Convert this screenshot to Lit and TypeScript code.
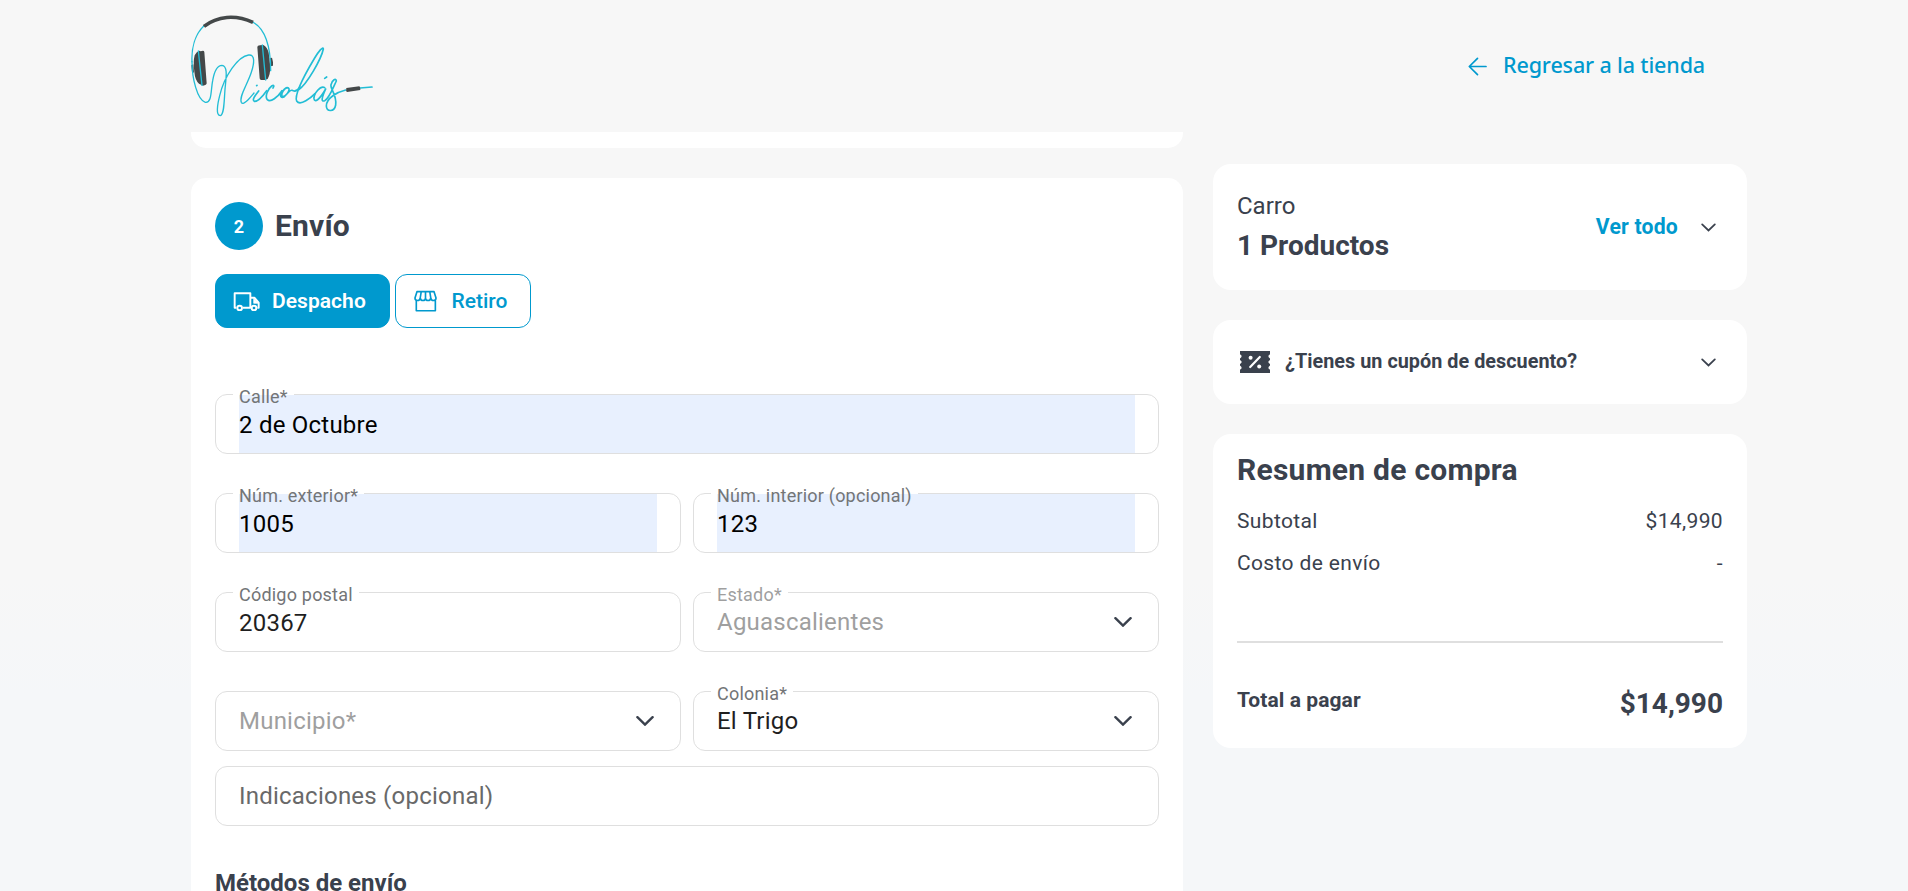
import { LitElement, html, svg, css, nothing } from "lit";
import { customElement, property } from "lit/decorators.js";
import { classMap } from "lit/directives/class-map.js";

const chevron = (size: "sm" | "lg") => html`
  <svg class="chev ${size}" viewBox="0 0 18 10" aria-hidden="true">
    <path d="M1.4 1.2 9 8.6 16.6 1.2" fill="none" stroke="currentColor"
      stroke-width=${size === "lg" ? 2.4 : 2.1} stroke-linecap="round" stroke-linejoin="miter" />
  </svg>`;

@customElement("form-field")
class FormField extends LitElement {
  @property() label = "";
  @property() value = "";
  @property() placeholder = "";
  @property({ type: Boolean }) autofill = false;
  @property({ type: Boolean }) select = false;
  @property({ type: Boolean }) disabled = false;

  static styles = css`
    :host { display: block; min-width: 0; }
    .field {
      box-sizing: border-box; height: 60px; min-width: 0; margin: 0;
      border: 1px solid #dfdfdf; border-radius: 12px; padding: 0 23px;
      font: 400 24px/28px Roboto, sans-serif; letter-spacing: 0.225px; color: #1f1f1f;
    }
    .legend {
      height: 1px; margin-left: -6px; padding: 0 6px; position: relative; top: -7px;
      font-size: 18px; line-height: 20px; letter-spacing: 0.21px; color: #737577; white-space: nowrap;
    }
    .body { height: 58px; display: flex; align-items: center; justify-content: space-between; }
    .input .text { padding-top: 1px; }
    .autofill { background: #e8f0fe; color: #000; }
    .placeholder { color: #696969; }
    .disabled, .disabled .legend, .disabled .placeholder { color: #9f9f9f; }
    .chev { width: 18px; height: 10px; margin-right: 3px; color: #3a414d; }
  `;

  render() {
    return html`
      <fieldset class=${classMap({ field: true, disabled: this.disabled })}>
        ${this.label ? html`<legend class="legend">${this.label}</legend>` : nothing}
        <div class=${classMap({ body: true, autofill: this.autofill, input: !this.select && !!this.value })}>
          <span class=${classMap({ text: true, placeholder: !this.value })}>${this.value || this.placeholder}</span>
          ${this.select ? chevron("lg") : nothing}
        </div>
      </fieldset>`;
  }
}

@customElement("brand-logo")
class BrandLogo extends LitElement {
  static styles = css`
    :host { display: block; }
    .logo { display: block; width: 190px; height: 132px; }
    .wire { fill: none; stroke: #22bdd5; stroke-width: 5; stroke-linecap: round; stroke-linejoin: round; }
    .thin { stroke-width: 4; }
    .dark { fill: #444849; }
    .band { fill: none; stroke: #444849; stroke-width: 11; }
  `;
  render() {
    return html`
      <svg class="logo" viewBox="33 0 570 396" role="img" aria-label="Nicolás">
        ${svg`
        <path class="dark" d="M62 154 Q72 150 73 156 L80 250 Q80 255 69 257 L57 251 Q45 240 43 215 Q39 185 44 166 Q50 154 58 152Z" />
        <path class="dark" d="M34 196 L40 193 L42 218 L36 216Z" />
        <path class="dark" d="M232 141 Q232 137 240 136 L250 135 Q262 142 266 158 L271 200 Q271 222 263 237 L253 240 L243 240 Q239 239 239 235Z" />
        <path class="dark" d="M269 175 L276 173 Q280 185 279 197 L271 199Z" />
        <path class="wire thin" d="M72 77 C45 103 34 145 36 185" />
        <path class="wire thin" d="M218 66 C255 86 272 135 272 212" />
        <path class="wire thin" d="M55 153 L66 256 M247 135 L257 240" />
        <path class="band" d="M72 79 C112 48 166 43 219 67" />
        <path class="wire thin" d="M36 185 C36 235 52 300 76 307 C96 310 92 272 98 242 C103 213 114 196 126 196 C143 198 139 228 136 258 C132 292 134 345 121 347 C107 347 112 315 119 287 C133 228 174 169 206 165 C226 163 223 190 214 217 C203 252 176 290 184 307 C190 319 210 293 222 279" />
        <path class="wire" d="M236 273 C225 287 215 300 223 304 C236 305 250 286 260 272 M230 257 L231 256" />
        <path class="wire" d="M279 264 C284 257 281 254 275 258 C263 267 254 289 262 299 C272 309 293 291 306 272 C297 288 303 296 313 290 C325 281 333 263 322 263 C312 264 302 282 306 289 C318 295 326 267 336 271 C345 276 354 270 360 261" />
        <path class="wire" d="M355 270 C382 252 424 176 430 147 C429 138 416 154 404 174 C377 219 342 284 350 303 C361 320 394 292 405 281" />
        <path class="wire" d="M434 263 C422 255 401 281 402 296 C404 308 417 302 437 267 C424 296 423 306 434 302 C448 296 461 259 469 243 C468 233 457 239 453 254 C450 268 471 284 467 315 C463 337 440 336 439 318 C439 294 472 276 497 270 M434 235 L440 231" />
        <path class="wire" d="M540 264 L576 261" />
        <path class="dark" d="M499 264 L538 259 Q541 260 541 270 L501 276 Q497 274 499 264Z" />`}
      </svg>`;
  }
}

@customElement("app-root")
class AppRoot extends LitElement {
  static styles = css`
    :host {
      display: block; height: 891px; overflow: hidden;
      background: linear-gradient(#f7f7f7 65%, #f5f7f9 78%);
      font-family: Roboto, sans-serif; color: #3a414d;
    }
    .header {
      height: 132px; box-sizing: border-box; padding: 0 203px 0 191px;
      display: flex; justify-content: space-between; align-items: center;
    }
    .back {
      display: flex; align-items: center; gap: 16px; color: #0099ce; padding-bottom: 2px;
      font: 500 21.5px/30px "Noto Sans", "Open Sans", sans-serif; letter-spacing: -.14px;
    }
    .back-text { padding-bottom: 1px; }
    .arrow { width: 19px; height: 19px; margin-top: 3px; }
    .columns { display: grid; grid-template-columns: 992px 534px; gap: 30px; padding-left: 191px; }
    .left, .right { display: flex; flex-direction: column; gap: 30px; }
    .right { padding-top: 32px; }
    .previous { height: 16px; border-radius: 0 0 15px 15px; background: #fff; }
    .step { height: 800px; box-sizing: border-box; padding: 24px; border-radius: 15px; background: #fff; }
    .heading { display: flex; align-items: center; gap: 12px; font-size: 30px; font-weight: 700; letter-spacing: .2px; }
    .title { padding-bottom: 2px; }
    .number {
      width: 48px; height: 48px; border-radius: 50%; background: #0099ce; color: #fff;
      display: grid; place-items: center; font-size: 18px; letter-spacing: 0;
    }
    .tabs { display: flex; gap: 5px; margin: 24px 0 66px; }
    .tab {
      height: 54px; width: 136px; box-sizing: border-box; border: 1px solid #0099ce; border-radius: 12px;
      display: flex; align-items: center; padding-left: 18px; font-size: 21px; font-weight: 500; color: #0099ce;
    }
    .tab.active { width: 175px; background: #0099ce; color: #fff; padding-left: 17px; letter-spacing: .05px; font-weight: 600; }
    .truck { width: 28px; height: 20px; margin-right: 11px; }
    .store { width: 25px; height: 23px; margin-left: -1px; margin-right: 13.5px; }
    .fields { display: grid; grid-template-columns: 1fr 1fr; column-gap: 12px; row-gap: 39px; }
    .wide { grid-column: 1 / -1; }
    .notes { margin-top: 15px; }
    .methods { margin: 43px 0 0; font-size: 24px; line-height: 28px; font-weight: 700; }
    .card { box-sizing: border-box; border-radius: 18px; background: #fff; padding: 0 24px; }
    .row { display: flex; justify-content: space-between; align-items: center; }
    .cart { height: 126px; }
    .cart-text { padding-bottom: 2px; }
    .cart-title { font-size: 24px; line-height: 38px; }
    .cart-count { font-size: 28px; line-height: 41px; font-weight: 700; }
    .more { display: flex; align-items: center; gap: 23px; margin-right: 7px; color: #0099ce; font-size: 21.2px; letter-spacing: .2px; font-weight: 700; }
    .more-text { padding-bottom: 1px; }
    .coupon { height: 84px; }
    .coupon-label { display: flex; align-items: center; gap: 15px; padding-left: 3px; font-size: 19.8px; letter-spacing: .04px; font-weight: 700; }
    .coupon-text { padding-bottom: 2px; }
    .ticket { width: 30px; height: 22px; }
    .chev { width: 15px; height: 9px; color: #3a414d; display: block; }
    .coupon .chev { margin-right: 7px; }
    .summary { height: 314px; padding-top: 18px; }
    .summary-title { margin: 0 0 12px; font-size: 30px; line-height: 36px; letter-spacing: .25px; font-weight: 700; }
    .line { font-size: 21px; line-height: 42px; letter-spacing: .36px; }
    .total { margin-top: 57px; border-top: 2px solid #dfdfdf; padding-top: 37px; align-items: flex-start; font-weight: 700; }
    .total-label { font-size: 21px; line-height: 40px; letter-spacing: .08px; }
    .total-value { font-size: 28px; line-height: 48px; }
  `;

  render() {
    return html`
      <header class="header">
        <brand-logo></brand-logo>
        <a class="back">
          <svg class="arrow" viewBox="0 0 19 19" fill="none" stroke="currentColor" stroke-width="1.7" stroke-linecap="round" stroke-linejoin="round">
            <path d="M18 9.5H1.5M9.5 1.3 1.3 9.5 9.5 17.7" />
          </svg>
          <span class="back-text">Regresar a la tienda</span>
        </a>
      </header>
      <main class="columns">
        <div class="left">
          <div class="previous"></div>
          <section class="step">
            <div class="heading"><span class="number">2</span><span class="title">Envío</span></div>
            <div class="tabs">
              <div class="tab active">
                <svg class="truck" viewBox="24 18 84 60" fill="none" stroke="currentColor" stroke-width="5.8" stroke-linejoin="round">
                  <path d="M34 68H29V25H76V68H54M76 38H88L101 53V68H97" />
                  <circle cx="44" cy="69" r="7" /><circle cx="87" cy="69" r="7" />
                  <path d="M86 40 101 55H86Z" fill="currentColor" stroke-width="2" />
                </svg>
                <span>Despacho</span>
              </div>
              <div class="tab">
                <svg class="store" viewBox="700 510 76 70" fill="none" stroke="currentColor" stroke-width="5" stroke-linejoin="round">
                  <path d="M712 515H764L770 534Q770 542 762 542Q755 542 754 534Q753 542 746 542Q738 542 738 534Q738 542 730 542Q723 542 722 534Q721 542 714 542Q706 542 706 534ZM725 515 722 534M738 515V534M751 515 754 534M710 542V573H768V542" />
                </svg>
                <span>Retiro</span>
              </div>
            </div>
            <div class="fields">
              <form-field class="wide" label="Calle*" value="2 de Octubre" autofill></form-field>
              <form-field label="Núm. exterior*" value="1005" autofill></form-field>
              <form-field label="Núm. interior (opcional)" value="123" autofill></form-field>
              <form-field label="Código postal" value="20367"></form-field>
              <form-field label="Estado*" value="Aguascalientes" select disabled></form-field>
              <form-field placeholder="Municipio*" select disabled></form-field>
              <form-field label="Colonia*" value="El Trigo" select></form-field>
            </div>
            <form-field class="notes" placeholder="Indicaciones (opcional)"></form-field>
            <h3 class="methods">Métodos de envío</h3>
          </section>
        </div>
        <aside class="right">
          <section class="card cart row">
            <div class="cart-text">
              <div class="cart-title">Carro</div>
              <div class="cart-count">1 Productos</div>
            </div>
            <div class="more"><span class="more-text">Ver todo</span>${chevron("sm")}</div>
          </section>
          <section class="card coupon row">
            <div class="coupon-label">
              <svg class="ticket" viewBox="0 0 30 22">
                <path fill="#3a414d" d="M0 0H30V3.2L28.5 4.6V6L30 7.6V9L28.5 10.3V11.7L30 13V14.4L28.5 16V17.4L30 18.8V22H0V18.8L1.5 17.4V16L0 14.4V13L1.5 11.7V10.3L0 9V7.6L1.5 6V4.6L0 3.2Z" />
                <path d="M10.2 16 19.8 6" stroke="#fff" stroke-width="2.2" stroke-linecap="round" />
                <circle cx="10.6" cy="6.8" r="2" fill="#fff" /><circle cx="19.2" cy="15.4" r="2" fill="#fff" />
              </svg>
              <span class="coupon-text">¿Tienes un cupón de descuento?</span>
            </div>
            ${chevron("sm")}
          </section>
          <section class="card summary">
            <h2 class="summary-title">Resumen de compra</h2>
            <div class="row line"><span>Subtotal</span><span>$14,990</span></div>
            <div class="row line"><span>Costo de envío</span><span>-</span></div>
            <div class="row total">
              <span class="total-label">Total a pagar</span><span class="total-value">$14,990</span>
            </div>
          </section>
        </aside>
      </main>`;
  }
}
